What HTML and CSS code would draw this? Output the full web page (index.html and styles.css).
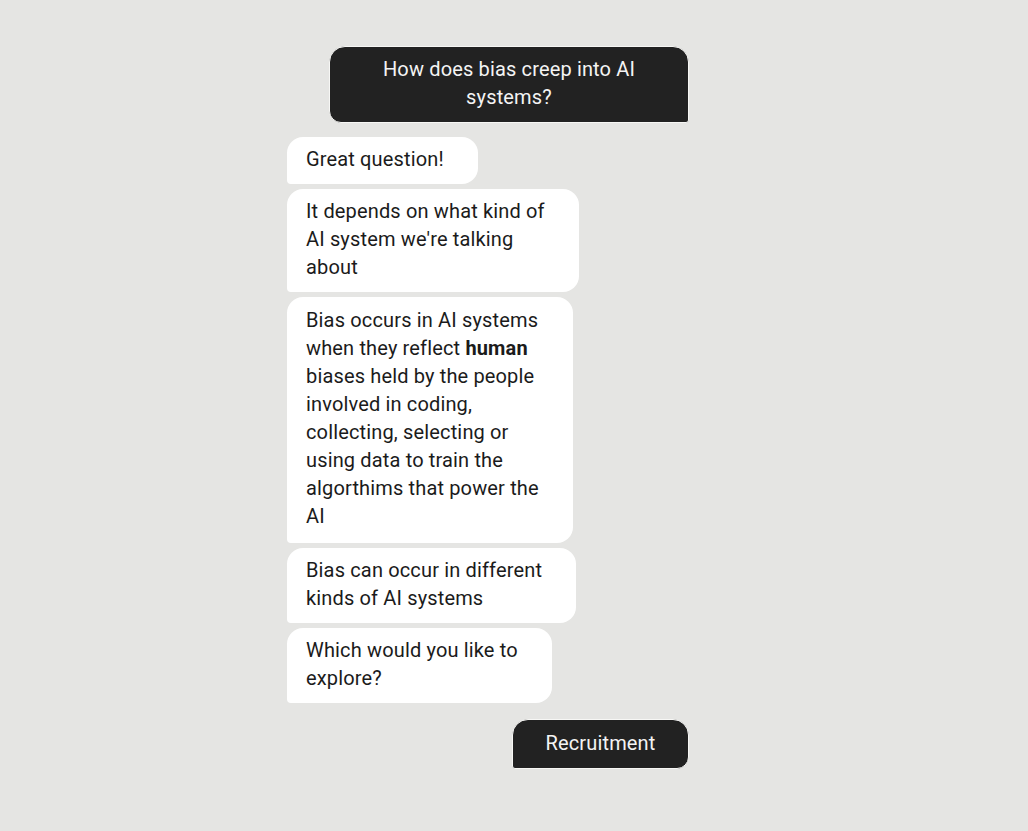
FILE: index.html
```html
<!DOCTYPE html>
<html lang="en">

<head>
    <meta charset="UTF-8">
    <meta name="viewport" content="width=device-width, initial-scale=1.0">
    <title>Bias in AI</title>
    <link rel="stylesheet" href="styles.css">
</head>

<body>
    <div class="chat">
        <div class="bubble user question">How does bias creep into AI<br>systems?</div>

        <div class="bot-group">
            <div class="bubble bot">Great question!</div>
            <div class="bubble bot">It depends on what kind of<br>AI system we're talking<br>about</div>
            <div class="bubble bot long">Bias occurs in AI systems<br>when they reflect <b>human</b><br>biases held by the people<br>involved in coding,<br>collecting, selecting or<br>using data to train the<br>algorthims that power the<br>AI</div>
            <div class="bubble bot">Bias can occur in different<br>kinds of AI systems</div>
            <div class="bubble bot">Which would you like to<br>explore?</div>
        </div>

        <div class="bubble user choice">Recruitment</div>
    </div>
</body>

</html>
```

FILE: styles.css
```css
body {
    margin: 0;
    padding: 0;
    background-color: #e5e5e3;
    font-family: Roboto, "Liberation Sans", sans-serif;
    font-size: 20px;
    line-height: 28px;
    letter-spacing: 0.15px;
    color: #1b1b1b;
}

.chat {
    width: 401px;
    margin-left: 287px;
    padding-top: 46px;
    padding-bottom: 40px;
    display: flex;
    flex-direction: column;
}

.bubble {
    box-sizing: border-box;
}

.user {
    align-self: flex-end;
    background-color: #222222;
    color: #f4f4f4;
    text-align: center;
    border: 1px solid #f7f7f5;
}

.question {
    width: 360px;
    margin-right: -1px;
    padding: 8px 20px 11px;
    border-radius: 16px 16px 3px 12px;
}

.choice {
    width: 177px;
    margin-right: -1px;
    padding: 9px 20px 11px;
    margin-top: 16px;
    border-radius: 16px 16px 12px 3px;
}

.bot-group {
    margin-top: 14px;
    display: flex;
    flex-direction: column;
    align-items: flex-start;
    gap: 5px;
}

.bot {
    background-color: #ffffff;
    padding: 8px 34px 11px 19px;
    border-radius: 16px 16px 16px 4px;
    max-width: 292px;
}

.bot.long {
    padding-top: 9px;
    padding-bottom: 13px;
}

.bot b {
    font-weight: 700;
}
```
